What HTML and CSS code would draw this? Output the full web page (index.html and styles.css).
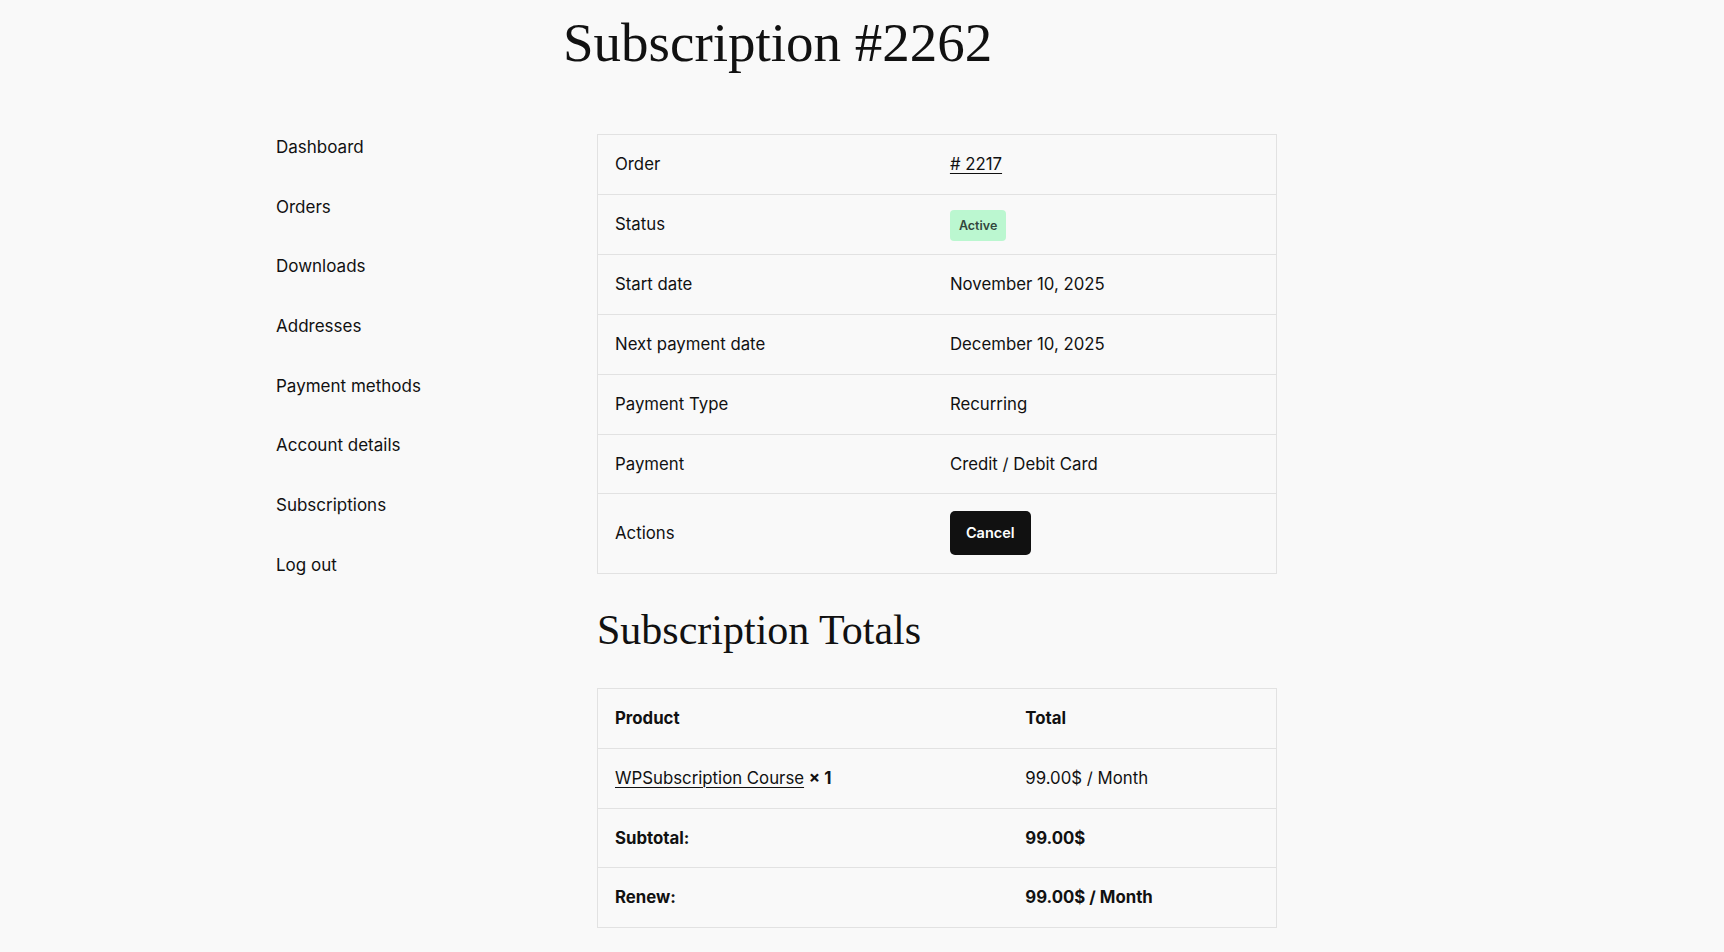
FILE: index.html
```html
<!DOCTYPE html>
<html lang="en">
<head>
<meta charset="utf-8">
<title>Subscription #2262</title>
<link rel="stylesheet" href="styles.css">
</head>
<body>
<div class="page">
  <h1 class="page-title">Subscription #2262</h1>
  <div class="account">
    <nav class="account-nav">
      <ul>
        <li><a href="#">Dashboard</a></li>
        <li><a href="#">Orders</a></li>
        <li><a href="#">Downloads</a></li>
        <li><a href="#">Addresses</a></li>
        <li><a href="#">Payment methods</a></li>
        <li><a href="#">Account details</a></li>
        <li><a href="#">Subscriptions</a></li>
        <li><a href="#">Log out</a></li>
      </ul>
    </nav>
    <main class="account-content">
      <table class="details">
        <tbody>
          <tr><td class="label">Order</td><td><a class="link" href="#"># 2217</a></td></tr>
          <tr><td class="label">Status</td><td><span class="badge">Active</span></td></tr>
          <tr><td class="label">Start date</td><td>November 10, 2025</td></tr>
          <tr><td class="label">Next payment date</td><td>December 10, 2025</td></tr>
          <tr><td class="label">Payment Type</td><td>Recurring</td></tr>
          <tr><td class="label">Payment</td><td>Credit / Debit Card</td></tr>
          <tr class="actions"><td class="label">Actions</td><td><a class="btn" href="#">Cancel</a></td></tr>
        </tbody>
      </table>

      <h2 class="section-title">Subscription Totals</h2>

      <table class="totals">
        <thead>
          <tr><th>Product</th><th>Total</th></tr>
        </thead>
        <tbody>
          <tr><td><a class="link" href="#">WPSubscription Course</a> <strong>× 1</strong></td><td>99.00$ / Month</td></tr>
          <tr><th>Subtotal:</th><th>99.00$</th></tr>
          <tr><th>Renew:</th><th>99.00$ / Month</th></tr>
        </tbody>
      </table>
    </main>
  </div>
</div>
</body>
</html>
```

FILE: styles.css
```css
html, body {
  margin: 0;
  padding: 0;
}

body {
  background: #f9f9f9;
  color: #111111;
  font-family: Inter, "Noto Sans", sans-serif;
  font-size: 16px;
  line-height: 24px;
}

.page {
  width: 1724px;
  height: 952px;
  overflow: hidden;
}

.page-title {
  margin: 0;
  padding: 7px 0 0 563px;
  font-family: "Liberation Serif", serif;
  font-weight: 400;
  font-size: 55px;
  line-height: 72px;
  color: #111;
}

.account {
  display: flex;
  padding-left: 276px;
  margin-top: 55px;
}

.account-nav {
  width: 321px;
  flex: none;
}

.account-nav ul {
  list-style: none;
  margin: -17px 0 0;
  padding: 0;
}

.account-nav li {
  padding: 18px 0 17.7px;
  font-size: 17px;
  line-height: 24px;
}

.account-nav a {
  color: #111;
  text-decoration: none;
}

.account-content {
  width: 680px;
  flex: none;
}

table {
  width: 100%;
  border-collapse: collapse;
  border: 1px solid #e2e2e2;
}

td, th {
  border-top: 1px solid #e2e2e2;
  padding: 17px 17px 17.75px;
  text-align: left;
  vertical-align: middle;
  line-height: 24px;
  font-size: 16.8px;
}

th {
  font-weight: 700;
}

.details td.label {
  width: 49.4%;
}

.link {
  color: #111;
  text-decoration: underline;
  text-underline-offset: 3px;
  text-decoration-thickness: 1px;
}

.badge {
  display: inline-block;
  background: #bbf7d0;
  color: #33473d;
  font-size: 12.5px;
  font-weight: 600;
  line-height: 31px;
  height: 31px;
  padding: 0 9px;
  border-radius: 4px;
  margin: -4px 0;
  vertical-align: middle;
}

.btn {
  display: inline-block;
  background: #111;
  color: #fff;
  text-decoration: none;
  font-size: 14.5px;
  font-weight: 600;
  line-height: 44px;
  height: 44px;
  padding: 0 16px;
  border-radius: 5px;
  vertical-align: middle;
}

.section-title {
  margin: 26px 0 0;
  font-family: "Liberation Serif", serif;
  font-weight: 400;
  font-size: 42px;
  line-height: 60px;
  color: #111;
}

.totals {
  margin-top: 28px;
}

.totals tr > :first-child {
  width: 60.5%;
}

.totals strong {
  font-weight: 700;
}
```
